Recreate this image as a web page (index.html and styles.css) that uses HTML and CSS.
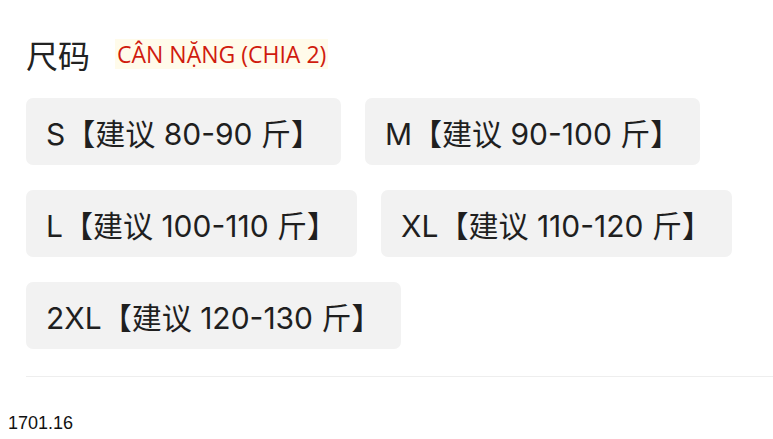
FILE: index.html
```html
<!DOCTYPE html>
<html lang="zh">
<head>
<meta charset="utf-8">
<link rel="stylesheet" href="styles.css">
</head>
<body>
  <section class="sku">
    <header class="sku-head">
      <h2 class="sku-title">尺码</h2>
      <span class="sku-note">CÂN NẶNG (CHIA 2)</span>
    </header>
    <div class="sku-options">
      <button class="chip">S【建议 80-90 斤】</button>
      <button class="chip">M【建议 90-100 斤】</button>
      <button class="chip">L【建议 100-110 斤】</button>
      <button class="chip">XL【建议 110-120 斤】</button>
      <button class="chip">2XL【建议 120-130 斤】</button>
    </div>
    <hr class="sku-divider">
  </section>
  <footer class="stamp">1701.16</footer>
</body>
</html>
```
FILE: styles.css
```css
* { box-sizing: border-box; }

html, body {
  margin: 0;
  padding: 0;
  background: #fff;
  width: 773px;
  height: 439px;
  overflow: hidden;
}

body {
  font-family: "Inter", "Noto Sans CJK SC", sans-serif;
  color: #1f1f1f;
}

.sku {
  padding: 34px 0 0 26px;
}

.sku-head {
  display: flex;
  align-items: center;
  gap: 25px;
  height: 40px;
}

.sku-title {
  margin: 0;
  font-family: "Noto Sans CJK SC", sans-serif;
  font-size: 32px;
  font-weight: 400;
  line-height: 40px;
  color: #222;
}

.sku-note {
  font-family: "Open Sans", "Noto Sans", sans-serif;
  font-size: 23px;
  line-height: 30px;
  color: #d01b0f;
  background: #fffbea;
  padding: 0 2px;
}

.sku-options {
  display: flex;
  flex-wrap: wrap;
  gap: 25px 24px;
  margin-top: 24px;
  padding-right: 20px;
}

.chip {
  height: 67px;
  padding: 0 20px;
  border: none;
  border-radius: 7px;
  background: #f2f2f2;
  font-family: "Inter", "Noto Sans CJK SC", sans-serif;
  font-size: 30px;
  color: #1f1f1f;
  display: flex;
  align-items: center;
  white-space: pre;
}

.sku-divider {
  margin: 27px 0 0 0;
  border: none;
  border-top: 1px solid #eeeeee;
}

.stamp {
  margin: 36px 0 0 8px;
  font-family: "Liberation Sans Narrow", "Liberation Sans", sans-serif;
  font-size: 18px;
  color: #111;
}
```
